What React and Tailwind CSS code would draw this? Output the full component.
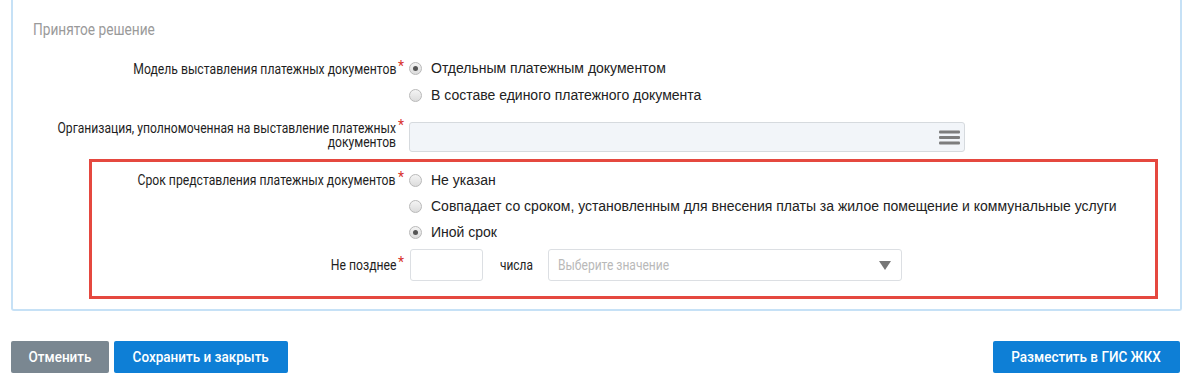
import React from 'react';

const roboto = { fontFamily: 'Roboto, "Liberation Sans", sans-serif' };

function Radio({ checked }) {
  return (
    <span className="w-[13px] h-[13px] shrink-0 rounded-full border border-[#b9b9b9] bg-gradient-to-b from-[#f4f4f4] to-[#dcdcdc] flex items-center justify-center">
      {checked && <span className="w-[5px] h-[5px] rounded-full bg-[#555]" />}
    </span>
  );
}

// labels in the reference use a narrow face: Roboto squeezed horizontally
function Label({ children, wrap }) {
  return (
    <div className="relative w-[313px] shrink-0 pr-[9px] flex justify-end text-[14px] leading-[14px] text-[#1e1e1e]" style={roboto}>
      {wrap ? (
        <div className="w-[400px] shrink-0 origin-right [transform:scaleX(0.865)] text-right">{children}</div>
      ) : (
        <span className="inline-block shrink-0 origin-right [transform:scaleX(0.87)] whitespace-nowrap">{children}</span>
      )}
      <span className="absolute right-[1px] -top-[3px] text-[14px] text-[#d8322c]">*</span>
    </div>
  );
}

function RadioRow({ label, text, checked, h = 'h-[27px]' }) {
  return (
    <div className={`flex items-center ${h}`}>
      {label ? <Label>{label}</Label> : <div className="w-[313px] shrink-0" />}
      <div className="ml-[4px] flex items-center gap-[9px] text-[14px] text-[#222] font-['Liberation_Sans',Arial,sans-serif]">
        <Radio checked={checked} />
        <span>{text}</span>
      </div>
    </div>
  );
}

export default function App() {
  return (
    <div className="bg-white w-[1194px] h-[389px] pl-[11px] pr-[12px]">
      {/* Panel */}
      <div className="border-2 border-t-0 border-[#c6e1f6] rounded-b-[3px] pt-[20px] pb-[10px]">
        <div className="pl-[20px] h-[20px] flex items-center">
          <span className="inline-block origin-left [transform:scaleX(0.855)] text-[16px] text-[#9a9a9a]" style={roboto}>Принятое решение</span>
        </div>

        <div className="pl-[79px] mt-[15px]">
          <RadioRow label="Модель выставления платежных документов" text="Отдельным платежным документом" checked />
          <RadioRow text="В составе единого платежного документа" />

          <div className="flex items-start mt-[12px]">
            <Label wrap>Организация, уполномоченная на выставление платежных документов</Label>
            <div className="ml-[4px] mt-[1px] w-[556px] h-[30px] rounded-[3px] border border-[#d6dade] bg-[#f2f5f9] flex items-center justify-end pr-[4px]">
              <svg width="21" height="15" viewBox="0 0 21 15">
                <rect x="0" y="0.5" width="21" height="3" rx="1" fill="#7d7d7d" />
                <rect x="0" y="6" width="21" height="3" rx="1" fill="#7d7d7d" />
                <rect x="0" y="11.5" width="21" height="3" rx="1" fill="#7d7d7d" />
              </svg>
            </div>
          </div>
        </div>

        {/* Highlighted block */}
        <div className="ml-[76px] mr-[22px] mt-[7px] border-[3px] border-[#e5483f] pt-[5px] pb-[15px]">
          <RadioRow label="Срок представления платежных документов" text="Не указан" h="h-[26px]" />
          <RadioRow text="Совпадает со сроком, установленным для внесения платы за жилое помещение и коммунальные услуги" h="h-[26px]" />
          <RadioRow text="Иной срок" checked h="h-[26px]" />

          <div className="flex items-center mt-[4px] h-[32px]">
            <Label>Не позднее</Label>
            <div className="ml-[5px] w-[73px] h-[32px] rounded-[3px] border border-[#dcdfe3] bg-white" />
            <span className="ml-[17px] inline-block origin-left [transform:scaleX(0.85)] text-[14px] text-[#222]" style={roboto}>числа</span>
            <div className="ml-[9px] w-[354px] h-[32px] rounded-[3px] border border-[#dcdfe3] bg-white flex items-center justify-between pl-[9px] pr-[10px]">
              <span className="inline-block origin-left [transform:scaleX(0.86)] text-[14px] text-[#b9b9b9]" style={roboto}>Выберите значение</span>
              <svg width="12" height="9" viewBox="0 0 12 9">
                <path d="M0 0 H12 L6 9 Z" fill="#777" />
              </svg>
            </div>
          </div>
        </div>
      </div>

      {/* Buttons */}
      <div className="mt-[30px] flex items-center justify-between pr-[2px]">
        <div className="flex gap-[5px]">
          <button className="h-[32px] w-[98px] rounded-[2px] bg-[#7a8791] text-white" style={roboto}>
            <span className="inline-block [transform:scaleX(0.9)] text-[15px] font-medium">Отменить</span>
          </button>
          <button className="h-[32px] w-[174px] rounded-[2px] bg-[#0e7fd6] text-white" style={roboto}>
            <span className="inline-block [transform:scaleX(0.9)] text-[15px] font-medium">Сохранить и закрыть</span>
          </button>
        </div>
        <button className="h-[32px] w-[187px] rounded-[2px] bg-[#0e7fd6] text-white" style={roboto}>
          <span className="inline-block [transform:scaleX(0.9)] text-[15px] font-medium">Разместить в ГИС ЖКХ</span>
        </button>
      </div>
    </div>
  );
}
